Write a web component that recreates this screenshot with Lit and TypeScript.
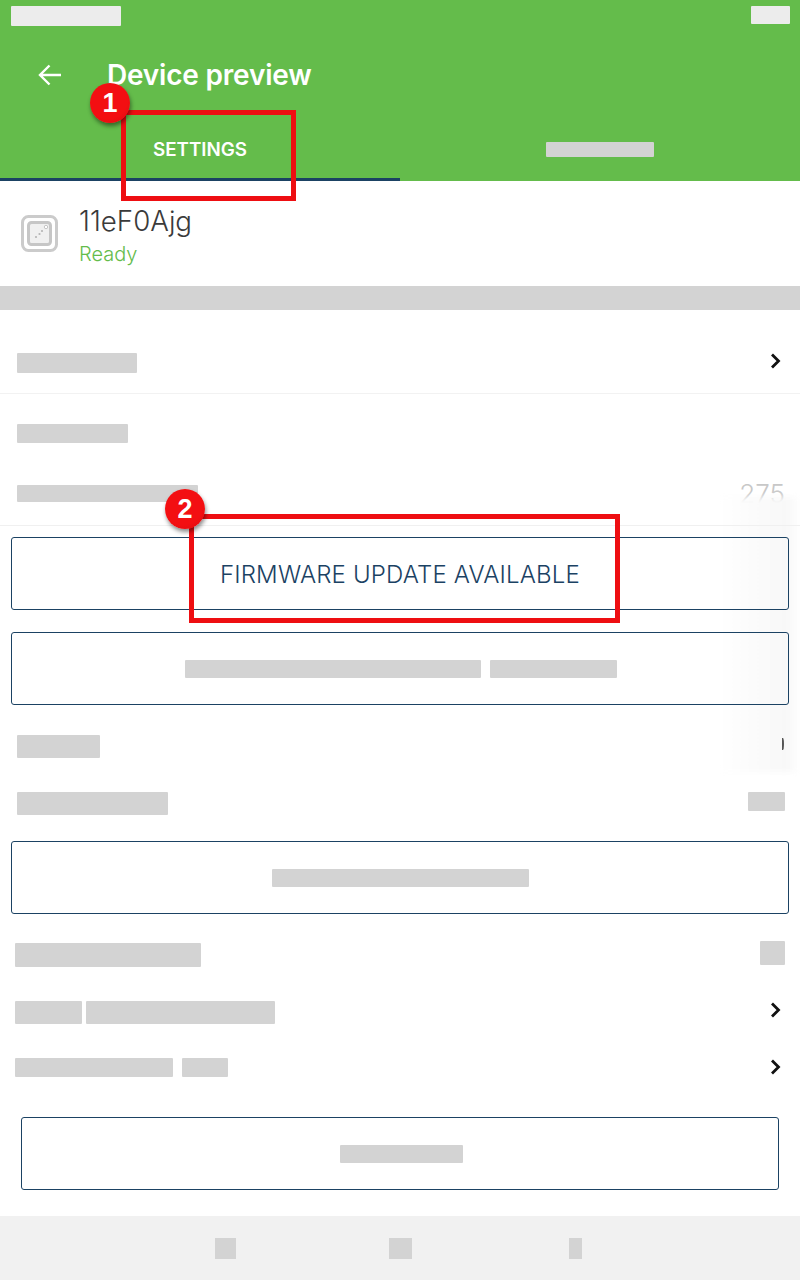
import { LitElement, html, css } from "lit";
import { customElement } from "lit/decorators.js";

const chevron = html`<svg class="chev" width="14" height="18" viewBox="0 0 14 18"><path d="M3 2.5 L9.5 9 L3 15.5" fill="none" stroke="#111" stroke-width="2.8"/></svg>`;

@customElement("app-root")
export class AppRoot extends LitElement {
  static styles = css`
    :host { display: block; width: 800px; height: 1280px; position: relative; overflow: hidden; background: #fff; font-family: "Inter", "Open Sans", sans-serif; color: #3a3a3a; }
    .r { background: #d3d3d3; display: block; border-radius: 1px; }
    .header { background: #64bc4b; height: 181px; display: flex; flex-direction: column; }
    .status { display: flex; justify-content: space-between; padding: 6px 10px 0 11px; height: 35px; box-sizing: border-box; align-items: flex-start; }
    .status i { display: block; background: #ececec; border-radius: 1px; }
    .s1 { width: 110px; height: 20px; }
    .s2 { width: 39px; height: 18px; }
    .toolbar { height: 80px; display: flex; align-items: center; padding-left: 37px; gap: 44px; color: #fff; font-size: 28px; font-weight: 600; letter-spacing: -0.2px; }
    .tabs { flex: 1; display: grid; grid-template-columns: 1fr 1fr; }
    .tab { display: flex; align-items: center; justify-content: center; padding-top: 3px; color: #fff; font-size: 18.8px; font-weight: 600; box-sizing: border-box; }
    .tab.on { border-bottom: 3px solid #1b4263; padding-top: 6px; }
    .device { height: 105px; display: flex; align-items: center; padding-left: 21px; gap: 21px; }
    .devtext { padding-top: 2px; }
    .devname { font-size: 27.7px; font-weight: 300; line-height: 34px; }
    .devstate { font-size: 20px; font-weight: 300; color: #64bc4b; margin-top: 5.5px; line-height: 22px; }
    .band { height: 24px; background: #d3d3d3; }
    .row { display: flex; align-items: center; justify-content: space-between; box-sizing: border-box; padding: 0 17px; }
    .r1 { height: 84px; padding-top: 22px; border-bottom: 1px solid #f2f2f2; }
    .r2 { height: 78px; }
    .r3 { height: 53px; align-items: flex-start; padding: 13px 15px 0 17px; }
    .r4 { height: 60px; padding: 22px 16px 0 17px; }
    .r5 { height: 55px; padding-top: 22px; padding-right: 15px; }
    .r6 { height: 70px; padding: 12px 15px 0; }
    .r7 { height: 56px; padding: 0 17px 0 15px; }
    .r8 { height: 55px; padding: 0 17px 0 15px; }
    .r1 .chev { margin-top: -4px; }
    .r7 .chev { margin-top: -5px; }
    .r8 .chev { margin-top: -1px; }
    .divider { height: 1px; background: #f0f0f0; position: relative; z-index: 2; }
    .btn { display: flex; align-items: center; justify-content: center; gap: 9px; margin: 0 11px; height: 73px; box-sizing: border-box; border: 1px solid #1b4263; border-radius: 3px; color: #1b4263; font-size: 24px; font-weight: 300; letter-spacing: 0.17px; position: relative; z-index: 2; }
    .btn.label { padding-top: 2px; }
    .btn.shift { padding-left: 2px; }
    .btn.inset { margin: 0 21px; }
    .faded { font-size: 26px; color: #c8c8c8; font-weight: 300; line-height: 24px; margin-top: -3px; }
    .sliver { width: 2px; height: 12px; background: #555; border-radius: 0 50% 50% 0 / 0 50% 50% 0; margin-top: -4px; position: relative; z-index: 2; }
    .pair4 { display: flex; gap: 4px; }
    .pair9 { display: flex; gap: 9px; }
    .tiny { margin-top: -4px; }
    .gap11 { height: 11px; }
    .gap22 { height: 22px; }
    .gap21 { height: 21px; }
    .nav { position: absolute; left: 0; right: 0; bottom: 0; height: 64px; background: #f1f1f1; }
    .nav i { position: absolute; top: 22px; height: 21px; background: #d3d3d3; }
    .shade { position: absolute; z-index: 1; left: 720px; width: 80px; top: 497px; height: 275px; background: linear-gradient(90deg, #fff, #fbfbfb 40%, #f8f8f8 85%, #fff); filter: blur(3px); pointer-events: none; }
    .box { position: absolute; z-index: 3; border: 5px solid #ee0e12; box-sizing: border-box; }
    .box1 { left: 121px; top: 110px; width: 175px; height: 91px; }
    .box2 { left: 189px; top: 514px; width: 431px; height: 109px; }
    .badge { position: absolute; z-index: 4; width: 40px; height: 40px; border-radius: 50%; background: radial-gradient(circle at 45% 40%, #f30f12 60%, #d80c10); color: #fff; font-family: "Liberation Sans", sans-serif; font-weight: 700; font-size: 27px; display: flex; align-items: center; justify-content: center; box-shadow: 1px 3px 4px rgba(0,0,0,.45); }
    .b1 { left: 90px; top: 83px; }
    .b2 { left: 165px; top: 489px; }
  `;

  private bar(w: number, h: number, cls = "") {
    return html`<span class="r ${cls}" style="width:${w}px;height:${h}px"></span>`;
  }

  render() {
    return html`
      <div class="header">
        <div class="status"><i class="s1"></i><i class="s2"></i></div>
        <div class="toolbar">
          <svg width="26" height="24" viewBox="0 0 26 24"><path d="M24 12H3M12.5 2.5 3 12l9.5 9.5" fill="none" stroke="#fff" stroke-width="2.4"/></svg>
          <span>Device preview</span>
        </div>
        <div class="tabs">
          <div class="tab on">SETTINGS</div>
          <div class="tab">${this.bar(108, 15)}</div>
        </div>
      </div>
      <div class="device">
        <svg width="37" height="37" viewBox="0 0 37 37">
          <rect x="1.5" y="1.5" width="34" height="34" rx="6" fill="#fff" stroke="#cbcbcb" stroke-width="3"/>
          <rect x="7.5" y="7.5" width="22" height="22" rx="3" fill="#f0f0f0" stroke="#c6c6c6" stroke-width="3"/>
          <circle cx="25" cy="12" r="1.7" fill="#fff" stroke="#c6c6c6"/>
          <circle cx="15" cy="22" r="1.1" fill="#b5b5b5"/>
          <circle cx="18.5" cy="19" r="1.1" fill="#b5b5b5"/>
          <circle cx="21" cy="16" r="1.1" fill="#b5b5b5"/>
        </svg>
        <div class="devtext">
          <div class="devname">11eF0Ajg</div>
          <div class="devstate">Ready</div>
        </div>
      </div>
      <div class="band"></div>
      <div class="list">
        <div class="row r1">${this.bar(120, 20)}${chevron}</div>
        <div class="row r2">${this.bar(111, 19)}</div>
        <div class="row r3">${this.bar(181, 17)}<span class="faded">275</span></div>
        <div class="divider"></div>
        <div class="gap11"></div>
        <div class="btn label">FIRMWARE UPDATE AVAILABLE</div>
        <div class="gap22"></div>
        <div class="btn shift">${this.bar(296, 18)}${this.bar(127, 18)}</div>
        <div class="row r4">${this.bar(83, 23)}<span class="sliver"></span></div>
        <div class="row r5">${this.bar(151, 23)}${this.bar(37, 19, "tiny")}</div>
        <div class="gap21"></div>
        <div class="btn">${this.bar(257, 18)}</div>
        <div class="row r6">${this.bar(186, 24)}${this.bar(25, 24, "tiny")}</div>
        <div class="row r7">
          <span class="pair4">${this.bar(67, 23)}${this.bar(189, 23)}</span>${chevron}
        </div>
        <div class="row r8">
          <span class="pair9">${this.bar(158, 19)}${this.bar(46, 19)}</span>${chevron}
        </div>
        <div class="gap22"></div>
        <div class="btn inset shift">${this.bar(123, 18)}</div>
      </div>
      <div class="nav">
        <i style="left:215px;width:21px"></i><i style="left:389px;width:23px"></i><i style="left:569px;width:13px"></i>
      </div>
      <div class="shade"></div>
      <div class="box box1"></div>
      <div class="box box2"></div>
      <div class="badge b1">1</div>
      <div class="badge b2">2</div>
    `;
  }
}
